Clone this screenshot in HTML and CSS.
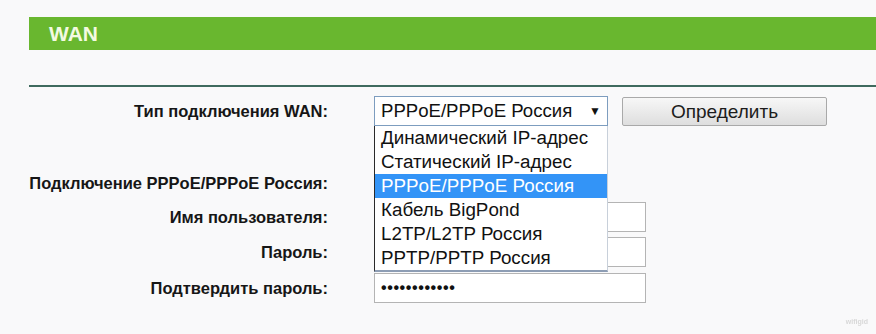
FILE: index.html
```html
<!DOCTYPE html>
<html lang="ru">
<head>
<meta charset="utf-8">
<title>WAN</title>
<link rel="stylesheet" href="styles.css">
</head>
<body>
<div class="page">
  <div class="header">WAN</div>
  <div class="rule"></div>
  <div class="form">
    <div class="row row-type">
      <div class="label">Тип подключения WAN:</div>
      <div class="control">
        <div class="select-wrap">
          <div class="select"><span>PPPoE/PPPoE Россия</span><span class="arrow">▼</span></div>
          <ul class="options">
            <li>Динамический IP-адрес</li>
            <li>Статический IP-адрес</li>
            <li class="selected">PPPoE/PPPoE Россия</li>
            <li>Кабель BigPond</li>
            <li>L2TP/L2TP Россия</li>
            <li>PPTP/PPTP Россия</li>
          </ul>
        </div>
        <button class="btn">Определить</button>
      </div>
    </div>
    <div class="row row-conn">
      <div class="label">Подключение PPPoE/PPPoE Россия:</div>
    </div>
    <div class="row row-user">
      <div class="label">Имя пользователя:</div>
      <div class="control"><div class="input"></div></div>
    </div>
    <div class="row row-pass">
      <div class="label">Пароль:</div>
      <div class="control"><div class="input"></div></div>
    </div>
    <div class="row row-confirm">
      <div class="label">Подтвердить пароль:</div>
      <div class="control"><div class="input dots">••••••••••••</div></div>
    </div>
  </div>
  <div class="watermark">wifigid</div>
</div>
</body>
</html>
```

FILE: styles.css
```css
html, body {
  margin: 0;
  padding: 0;
  background: #f9f9fa;
}
body {
  font-family: "Liberation Sans", Arial, sans-serif;
  color: #1a1a1a;
}
.page {
  position: relative;
  width: 876px;
  height: 334px;
  overflow: hidden;
}
.header {
  margin: 17px 0 0 29px;
  height: 33px;
  line-height: 33px;
  background: #69b72f;
  color: #f3fae2;
  font-weight: bold;
  font-size: 21px;
  padding-left: 20px;
}
.rule {
  margin: 35px 0 0 29px;
  height: 2px;
  background: #3f6a5e;
}
.form {
  display: flex;
  flex-direction: column;
}
.row {
  display: flex;
  align-items: center;
  height: 30px;
}
.row-type { margin-top: 9px; align-items: flex-start; }
.row-conn { margin-top: 42px; }
.row-user { margin-top: 4px; }
.row-pass { margin-top: 5px; }
.row-confirm { margin-top: 6px; }
.label {
  width: 328px;
  flex: none;
  text-align: right;
  font-weight: bold;
  font-size: 16.5px;
  color: #161616;
}
.row-type .label { line-height: 30px; }
.control {
  margin-left: 46px;
  display: flex;
  align-items: flex-start;
}
.select-wrap {
  position: relative;
  width: 234px;
  z-index: 2;
}
.select {
  box-sizing: border-box;
  height: 30px;
  border: 1px solid #7d9dbf;
  background: #fff;
  display: flex;
  align-items: center;
  justify-content: space-between;
  padding: 0 6px 0 6px;
  font-size: 18.6px;
  color: #111;
}
.arrow {
  font-size: 12px;
  color: #111;
}
.options {
  position: absolute;
  left: 0;
  top: 30px;
  width: 234px;
  box-sizing: border-box;
  margin: 0;
  padding: 0;
  list-style: none;
  background: #fff;
  border-left: 1px solid #2a2a2a;
  border-right: 1px solid #c8d0da;
  border-bottom: 2px solid #8d9db4;
}
.options li {
  height: 24px;
  line-height: 24px;
  padding-left: 6px;
  font-size: 18.8px;
  color: #111;
  white-space: nowrap;
}
.options li.selected {
  background: #3394f7;
  color: #fff;
}
.btn {
  margin: 1px 0 0 14px;
  width: 205px;
  height: 29px;
  box-sizing: border-box;
  border: 1px solid #a9a9a9;
  border-radius: 2px;
  background: linear-gradient(#f7f7f7, #dedede);
  font-family: "Liberation Sans", Arial, sans-serif;
  font-size: 19px;
  color: #1c1c1c;
  padding: 0;
}
.input {
  box-sizing: border-box;
  width: 272px;
  height: 30px;
  border: 1px solid #b4b4b4;
  background: #fff;
}
.dots {
  font-size: 16px;
  line-height: 28px;
  padding-left: 6px;
  letter-spacing: 0.6px;
  font-weight: bold;
  color: #111;
}
.watermark {
  position: absolute;
  right: 8px;
  bottom: 9px;
  font-size: 7px;
  font-weight: bold;
  color: #d8d8d8;
  filter: blur(0.6px);
}
```
